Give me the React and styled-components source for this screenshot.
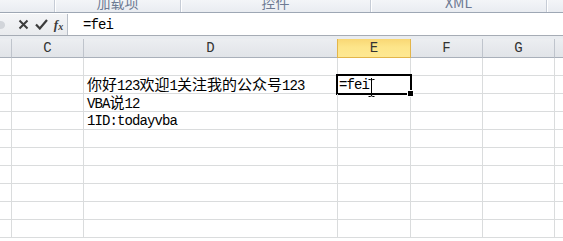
import styled, { createGlobalStyle } from 'styled-components';

const GlobalStyle = createGlobalStyle`
	html, body {
		margin: 0;
		padding: 0;
		background: #ffffff;
		overflow: hidden;
	}
`;

const columns = [
	{ key: 'row', width: 12, label: '' },
	{ key: 'C', width: 72, label: 'C' },
	{ key: 'D', width: 254, label: 'D' },
	{ key: 'E', width: 73, label: 'E' },
	{ key: 'F', width: 72, label: 'F' },
	{ key: 'G', width: 72, label: 'G' },
	{ key: 'H', width: 40, label: '' },
];

const cells = {
	'D2': '你好123欢迎1关注我的公众号123',
	'D3': 'VBA说12',
	'D4': '1ID:todayvba',
};

const ribbonGroups = [
	{ width: 55, label: '' },
	{ width: 126, label: '加载项' },
	{ width: 190, label: '控件' },
	{ width: 176, label: 'XML' },
	{ width: 30, label: '' },
];

function Mixed({ text }) {
	const parts = text.split(/([\u4e00-\u9fff]+)/).filter(Boolean);
	return (
		<Line>
			{parts.map((p, i) =>
				/[\u4e00-\u9fff]/.test(p) ? <Han key={i}>{p}</Han> : <Latin key={i}>{p}</Latin>
			)}
		</Line>
	);
}

export default function App() {
	const rows = Array.from({ length: 10 }, (_, i) => i + 1);
	return (
		<>
			<GlobalStyle />
			<Ribbon>
				{ribbonGroups.map((g, i) => (
					<RibbonGroup key={i} style={{ width: g.width }}>
						<RibbonLabel>{g.label}</RibbonLabel>
					</RibbonGroup>
				))}
			</Ribbon>
			<FormulaBar>
				<Buttons>
					<Grip />
					<Btn>
						<svg width="11" height="11" viewBox="0 0 11 11">
							<path d="M1.5 1.5 L9.5 9.5 M9.5 1.5 L1.5 9.5" stroke="#3c3c3c" strokeWidth="2" />
						</svg>
					</Btn>
					<Btn>
						<svg width="13" height="11" viewBox="0 0 13 11">
							<path d="M1 5.5 L4.8 9.5 L12 1" stroke="#3c3c3c" strokeWidth="2.2" fill="none" />
						</svg>
					</Btn>
					<Fx>
						f<sub>x</sub>
					</Fx>
				</Buttons>
				<Input>
					<Line>
						<Latin>=fei</Latin>
					</Line>
				</Input>
			</FormulaBar>
			<Gap />
			<Sheet>
				{columns.map((c) => (
					<Header key={c.key} $active={c.key === 'E'}>
						{c.label}
					</Header>
				))}
				{rows.map((r) =>
					columns.map((c) => {
						const id = c.key + r;
						const active = id === 'E2';
						return (
							<Cell key={id} $active={active}>
								{cells[id] && <Mixed text={cells[id]} />}
								{active && (
									<>
										<Line>
											<Latin>=fei</Latin>
										</Line>
										<Caret />
										<IBeam viewBox="0 0 7 18" width="7" height="18">
											<path d="M0.5 0.5 H2.5 Q3.5 0.5 3.5 2 V16 Q3.5 17.5 2.5 17.5 H0.5 M6.5 0.5 H4.5 Q3.5 0.5 3.5 2 M3.5 16 Q3.5 17.5 4.5 17.5 H6.5" stroke="#000" fill="none" strokeWidth="1" />
										</IBeam>
									</>
								)}
							</Cell>
						);
					})
				)}
			</Sheet>
		</>
	);
}

const Ribbon = styled.div`
	display: flex;
	height: 13px;
	box-sizing: border-box;
	border-bottom: 1px solid #9ea7b4;
	background: linear-gradient(#f3f5f8, #e9ecf1);
	overflow: hidden;
`;

const RibbonGroup = styled.div`
	flex: none;
	box-sizing: border-box;
	border-right: 1px solid #c6ccd6;
	box-shadow: 1px 0 0 #ffffff;
	display: flex;
	justify-content: center;
`;

const RibbonLabel = styled.span`
	font-family: 'Noto Sans CJK SC', 'Liberation Sans', sans-serif;
	font-size: 14px;
	line-height: 14px;
	margin-top: -5px;
	color: #6d7a93;
`;

const FormulaBar = styled.div`
	display: flex;
	height: 23px;
	box-sizing: border-box;
	border-top: 1px solid #ffffff;
	border-bottom: 1px solid #a6acb5;
	background: #ffffff;
`;

const Buttons = styled.div`
	display: flex;
	align-items: center;
	width: 67px;
	flex: none;
	background: linear-gradient(#f4f5f7, #e9ebee);
	border-right: 1px solid #b9bfc8;
`;

const Grip = styled.div`
	width: 10px;
	height: 8px;
	border-radius: 50%;
	background: #d2d5da;
	margin-left: -4px;
	margin-right: 9px;
`;

const Btn = styled.div`
	width: 19px;
	display: flex;
	justify-content: center;
	align-items: center;
`;

const Fx = styled.div`
	width: 18px;
	text-align: center;
	font-family: 'Liberation Serif', serif;
	font-style: italic;
	font-weight: bold;
	font-size: 13px;
	color: #3c3c3c;
	sub {
		font-size: 10px;
		vertical-align: -1px;
	}
`;

const Input = styled.div`
	flex: 1;
	padding-left: 15px;
	display: flex;
	align-items: center;
`;

const Gap = styled.div`
	height: 3px;
	background: #e9ecf0;
`;

const Sheet = styled.div`
	display: grid;
	grid-template-columns: ${columns.map((c) => c.width + 'px').join(' ')};
	grid-auto-rows: 18px;
	grid-template-rows: 19px;
`;

const Header = styled.div`
	box-sizing: border-box;
	border-right: 1px solid ${(p) => (p.$active ? '#e3b54a' : '#bfc4cc')};
	border-bottom: 1px solid ${(p) => (p.$active ? '#e3b54a' : '#a9b0ba')};
	${(p) => p.$active && 'border-left: 1px solid #e3b54a; margin-left: -1px;'}
	background: ${(p) =>
		p.$active ? 'linear-gradient(#f9d774, #fde58a 45%, #fee892)' : 'linear-gradient(#eceef1, #e1e4e8)'};
	display: flex;
	align-items: center;
	justify-content: center;
	font-family: 'Liberation Mono', monospace;
	font-size: 14px;
	color: #333;
`;

const Cell = styled.div`
	box-sizing: border-box;
	border-right: 1px solid #dadcdd;
	border-bottom: 1px solid #dadcdd;
	padding-left: 3px;
	display: flex;
	align-items: center;
	white-space: nowrap;
	position: relative;
	${(p) =>
		p.$active &&
		`
		padding-left: 1px;
		&::after {
			content: '';
			position: absolute;
			left: -2px;
			top: -2px;
			right: -2px;
			bottom: -2px;
			border: 2px solid #000;
		}
		&::before {
			content: '';
			position: absolute;
			right: -4px;
			bottom: -4px;
			width: 5px;
			height: 5px;
			background: #000;
			border: 1px solid #fff;
			z-index: 2;
		}
	`}
`;

const Line = styled.span`
	display: inline-block;
	line-height: 18px;
	color: #000;
`;

const Han = styled.span`
	font-family: 'Noto Sans CJK SC', sans-serif;
	font-size: 15px;
`;

const Latin = styled.span`
	font-family: 'Liberation Mono', monospace;
	font-size: 14px;
	letter-spacing: -0.9px;
`;

const Caret = styled.span`
	width: 1px;
	height: 14px;
	background: #000;
	margin-left: 2px;
`;

const IBeam = styled.svg`
	position: absolute;
	left: 30px;
	top: 3px;
	z-index: 3;
`;
